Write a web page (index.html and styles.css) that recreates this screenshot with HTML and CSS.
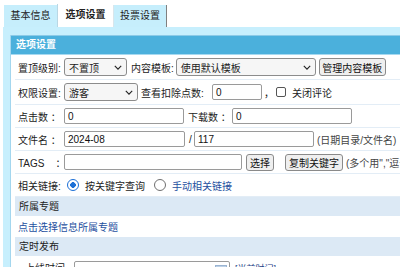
FILE: index.html
```html
<!DOCTYPE html>
<html>
<head>
<meta charset="utf-8">
<link rel="stylesheet" href="styles.css">
</head>
<body>
<div class="page">
  <div class="tabs">
    <div class="tab">基本信息</div>
    <div class="tab active">选项设置</div>
    <div class="tab last">投票设置</div>
  </div>
  <div class="area">
    <div class="panel">
      <div class="ph">选项设置</div>
      <div class="body">
        <div class="row tall">
          <span class="lbl">置顶级别:</span>
          <span class="sel w63"><span class="st">不置顶</span><svg class="chev" viewBox="0 0 10 6"><path d="M1 1 L5 5 L9 1" fill="none" stroke="#222" stroke-width="1.4"/></svg></span>
          <span class="lbl2">内容模板:</span>
          <span class="sel w140"><span class="st">使用默认模板</span><svg class="chev" viewBox="0 0 10 6"><path d="M1 1 L5 5 L9 1" fill="none" stroke="#222" stroke-width="1.4"/></svg></span>
          <span class="btn b67">管理内容模板</span>
        </div>
        <div class="row tall">
          <span class="lbl">权限设置:</span>
          <span class="sel w74"><span class="st">游客</span><svg class="chev" viewBox="0 0 10 6"><path d="M1 1 L5 5 L9 1" fill="none" stroke="#222" stroke-width="1.4"/></svg></span>
          <span class="lbl3">查看扣除点数:</span>
          <span class="inp w50">0</span>
          <span class="comma">，</span>
          <span class="chk"></span>
          <span class="txt">关闭评论</span>
        </div>
        <div class="row">
          <span class="lbl">点击数 ：</span>
          <span class="inp w120">0</span>
          <span class="lbl4">下载数 ：</span>
          <span class="inp w120">0</span>
        </div>
        <div class="row">
          <span class="lbl">文件名 ：</span>
          <span class="inp w121">2024-08</span>
          <span class="slash">/</span>
          <span class="inp w120">117</span>
          <span class="note">(日期目录/文件名)</span>
        </div>
        <div class="row">
          <span class="lbl tags">TAGS&nbsp;&nbsp;&nbsp;&nbsp;：</span>
          <span class="inp w178"></span>
          <span class="btn b28">选择</span>
          <span class="btn b58">复制关键字</span>
          <span class="note">(多个用","逗号隔开)</span>
        </div>
        <div class="row">
          <span class="lbl">相关链接:</span>
          <span class="radio on"></span>
          <span class="txt">按关键字查询</span>
          <span class="radio"></span>
          <span class="txt link">手动相关链接</span>
        </div>
        <div class="sh">所属专题</div>
        <div class="row plain"><span class="link">点击选择信息所属专题</span></div>
        <div class="sh">定时发布</div>
        <div class="row sub">
          <span class="lbl5">上线时间</span>
          <span class="inp w156"><span class="cal"></span></span>
          <span class="now">[当前时间]</span>
        </div>
      </div>
    </div>
  </div>
</div>
</body>
</html>
```
FILE: styles.css
```css
html, body {
  margin: 0;
  padding: 0;
  background: #ffffff;
  overflow: hidden;
}
.page {
  width: 400px;
  height: 267px;
  overflow: hidden;
  font-family: "Liberation Sans", "Noto Sans CJK SC", sans-serif;
  font-size: 10px;
  color: #222;
}
.tabs {
  display: flex;
  padding: 5px 0 0 4px;
  height: 22px;
}
.tab {
  width: 53px;
  height: 22px;
  line-height: 22px;
  text-align: center;
  background: #c6eefc;
  font-size: 10px;
  color: #222;
  box-sizing: border-box;
}
.tab.active {
  width: 56px;
  background: #ffffff;
  font-weight: bold;
  border-left: 1px solid #b9d7e4;
  margin-top: -1px;
  height: 23px;
}
.tab.last {
  width: 54px;
  border-left: 1px solid #d9e6ec;
  border-right: 1px solid #808080;
}
.area {
  margin-left: 3px;
  background: #c7effd;
  padding: 8px 0 0 7px;
  height: 240px;
}
.panel {
  width: 500px;
  border-left: 1px solid #a3d6ee;
  background: #ffffff;
  height: 240px;
}
.ph {
  border-top: 1px solid #8ccae7;
  border-bottom: 1px solid #a6d9f0;
  background: #4bb0dc;
  height: 18px;
  line-height: 18px;
  padding-left: 5px;
  color: #ffffff;
  font-weight: bold;
}
.body {
  padding-left: 4px;
}
.row {
  display: flex;
  align-items: center;
  height: 22px;
  border-bottom: 1px solid #e3edf6;
  padding-left: 3px;
  white-space: nowrap;
}
.row.tall {
  height: 24px;
}
.lbl {
  width: 42px;
  margin-right: 4px;
  white-space: nowrap;
}
.lbl2 {
  margin: 0 2px 0 4px;
}
.lbl3 {
  margin: 0 4px 0 3px;
  width: 67px;
}
.lbl4 {
  width: 40px;
  margin: 0 4px 0 4px;
}
.lbl5 {
  width: 49px;
  padding-left: 7px;
  line-height: 16px;
}
.sel {
  display: flex;
  align-items: center;
  justify-content: space-between;
  height: 18px;
  box-sizing: border-box;
  border: 1px solid #8c8c8c;
  border-radius: 3px;
  background: #f6f6f6;
  padding: 0 4px 0 4px;
}
.chev {
  width: 8px;
  height: 5px;
}
.w63 { width: 63px; }
.w140 { width: 140px; }
.w74 { width: 74px; }
.inp {
  display: flex;
  align-items: center;
  height: 16px;
  box-sizing: border-box;
  border: 1px solid #9a9a9a;
  border-radius: 2px;
  background: #ffffff;
  padding-left: 3px;
  color: #111;
}
.w50 { width: 50px; }
.w120 { width: 120px; }
.w121 { width: 121px; }
.w178 { width: 178px; }
.w156 { width: 156px; justify-content: flex-end; padding-right: 2px; }
.btn {
  display: flex;
  align-items: center;
  justify-content: center;
  height: 18px;
  box-sizing: border-box;
  border: 1px solid #8a8a8a;
  border-radius: 3px;
  background: #efefef;
  color: #111;
}
.b67 { width: 67px; margin-left: 3px; }
.b28 { width: 28px; margin-left: 4px; height: 17px; }
.b58 { width: 58px; margin-left: 11px; height: 17px; }
.comma {
  width: 10px;
  margin-left: 2px;
}
.chk {
  width: 10px;
  height: 10px;
  box-sizing: border-box;
  border: 1px solid #555;
  border-radius: 2px;
  margin: 0 6px 0 2px;
}
.slash {
  margin: 0 2px 0 4px;
  width: 3px;
}
.note {
  margin-left: 3px;
  color: #444;
}
.radio {
  width: 12px;
  height: 12px;
  box-sizing: border-box;
  border: 1px solid #6f6f6f;
  border-radius: 50%;
  margin: 0 6px 0 5px;
}
.radio.on {
  border: 1.5px solid #1b6fd6;
  background: radial-gradient(circle, #1b6fd6 0 2.6px, #ffffff 3px);
  margin-left: 3px;
}
.txt + .radio {
  margin-left: 9px;
}
.link {
  color: #1e4f9e;
}
.sh {
  background: #dce9f5;
  height: 19px;
  line-height: 19px;
  padding-left: 4px;
  color: #222;
}
.row.plain {
  height: 21px;
  border-bottom: none;
}
.row.sub {
  height: 26px;
  border-bottom: none;
  align-items: flex-start;
  padding-top: 5px;
}
.cal {
  width: 10px;
  height: 8px;
  margin-top: 3px;
  background: #bcd0e6;
  border: 1px solid #9ab4d2;
}
.w156 { align-items: flex-start; }
.now {
  margin-left: 5px;
  color: #1a3c86;
  font-size: 9px;
  line-height: 16px;
}
```
